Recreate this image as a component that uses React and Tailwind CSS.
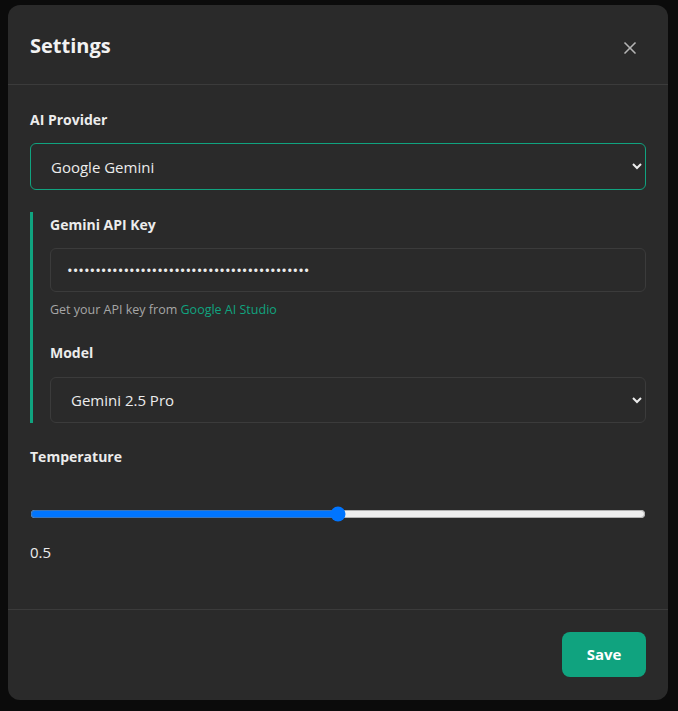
import { X } from 'lucide-react';

function Label({ children, className = '' }) {
  return <div className={`text-[14px] font-bold leading-5 text-[#ececec] ${className}`}>{children}</div>;
}

export default function App() {
  return (
    <div className="min-h-[711px] bg-[#0b0b0b] pl-[8px] pt-[5px] [font-family:'Open_Sans','Noto_Sans',sans-serif]">
      <div className="w-[660px] rounded-xl bg-[#2a2a2a] text-white">
        <div className="flex items-center justify-between border-b border-[#3b3b3b] px-[22px] pt-[27px] pb-[24px]">
          <h2 className="text-[20px] font-bold leading-7 text-[#f2f2f2]">Settings</h2>
          <button className="mr-[6px] mt-1 text-[#b4b4b4]">
            <X size={20} strokeWidth={2} />
          </button>
        </div>

        <div className="px-[22px] pt-[25px] pb-[47px]">
          <Label>AI Provider</Label>
          <select
            defaultValue="gemini"
            className="mt-[13px] h-[47px] w-full rounded-md border border-[#10a37f] bg-[#2a2a2a] px-4 text-[15px] text-[#ececec] outline-none [color-scheme:dark]"
          >
            <option value="openai">OpenAI</option>
            <option value="gemini">Google Gemini</option>
          </select>

          <div className="mt-[22px] border-l-[3px] border-[#10a37f] pl-[17px] pt-[3px]">
            <Label>Gemini API Key</Label>
            <input
              type="password"
              readOnly
              value="AIzaSyD4x9kLm2Qw8Rt6Yp3Nb7Vc1Xz5Hj0Gf2AbQkT"
              className="mt-[13px] h-[44px] w-full rounded-md border border-[#3b3b3b] bg-[#2a2a2a] px-4 text-[15px] text-[#ececec] outline-none"
            />
            <p className="mt-[9px] text-[12.5px] leading-[18px] text-[#a6a6a6]">
              Get your API key from <a className="text-[#10a37f]">Google AI Studio</a>
            </p>

            <Label className="mt-[24px]">Model</Label>
            <select
              defaultValue="pro"
              className="mt-[14px] h-[46px] w-full rounded-md border border-[#3b3b3b] bg-[#2a2a2a] px-4 text-[15px] text-[#ececec] outline-none [color-scheme:dark]"
            >
              <option value="pro">Gemini 2.5 Pro</option>
              <option value="flash">Gemini 2.5 Flash</option>
            </select>
          </div>

          <Label className="mt-[24px]">Temperature</Label>
          <input type="range" min="0" max="1" step="0.1" defaultValue="0.5" className="mt-[39px] block w-full" />
          <div className="mt-[20px] text-[15px] leading-5 text-[#ececec]">0.5</div>
        </div>

        <div className="flex justify-end border-t border-[#3b3b3b] px-[22px] pt-[22px] pb-[23px]">
          <button className="h-[45px] w-[84px] rounded-lg bg-[#10a37f] text-[15px] font-bold text-white">Save</button>
        </div>
      </div>
    </div>
  );
}
